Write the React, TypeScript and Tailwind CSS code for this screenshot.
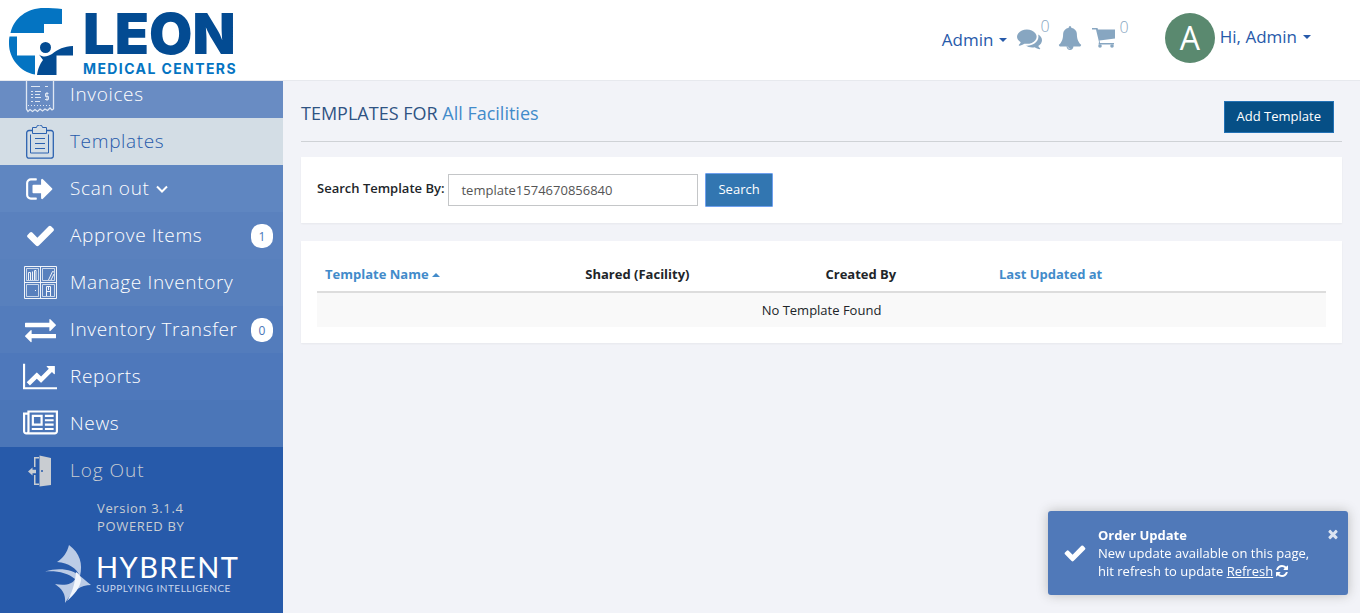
import type { ReactNode } from "react";

const PATHS = {
  check: "M1671 566q0 40-28 68l-724 724-136 136q-28 28-68 28t-68-28l-136-136-362-362q-28-28-28-68t28-68l136-136q28-28 68-28t68 28l294 295 656-657q28-28 68-28t68 28l136 136q28 28 28 68z",
  signOut: "M704 1440q0 4 1 20t.5 26.5-3 23.5-10 19.5-20.5 6.5h-320q-119 0-203.5-84.5t-84.5-203.5v-704q0-119 84.5-203.5t203.5-84.5h320q13 0 22.5 9.5t9.5 22.5q0 4 1 20t.5 26.5-3 23.5-10 19.5-20.5 6.5h-320q-66 0-113 47t-47 113v704q0 66 47 113t113 47h312l11.5 1 11.5 3 8 5.5 7 9 2 13.5zm928-544q0 26-19 45l-544 544q-19 19-45 19t-45-19-19-45v-288h-448q-26 0-45-19t-19-45v-384q0-26 19-45t45-19h448v-288q0-26 19-45t45-19 45 19l544 544q19 19 19 45z",
  exchange: "M1792 1184v192q0 13-9.5 22.5t-22.5 9.5h-1376v192q0 13-9.5 22.5t-22.5 9.5q-12 0-24-10l-319-320q-9-9-9-22 0-14 9-23l320-320q9-9 23-9 13 0 22.5 9.5t9.5 22.5v192h1376q13 0 22.5 9.5t9.5 22.5zm0-544q0 14-9 23l-320 320q-9 9-23 9-13 0-22.5-9.5t-9.5-22.5v-192h-1376q-13 0-22.5-9.5t-9.5-22.5v-192q0-13 9.5-22.5t22.5-9.5h1376v-192q0-14 9-23t23-9q12 0 24 10l319 319q9 9 9 23z",
  chart: "M2048 1536v128h-2048v-1536h128v1408h1920zm-128-1248v435q0 21-19.5 29.5t-35.5-7.5l-121-121-633 633q-10 10-23 10t-23-10l-233-233-416 416-192-192 585-585q10-10 23-10t23 10l233 233 464-464-121-121q-16-16-7.5-35.5t29.5-19.5h435q14 0 23 9t9 23z",
  news: "M1024 512h-384v384h384v-384zm128 640v128h-640v-128h640zm0-768v640h-640v-640h640zm640 768v128h-512v-128h512zm0-256v128h-512v-128h512zm0-256v128h-512v-128h512zm0-256v128h-512v-128h512zm-1536 960v-960h-128v960q0 26 19 45t45 19 45-19 19-45zm1664 0v-1088h-1536v1088q0 33-11 64h1483q26 0 45-19t19-45zm128-1216v1216q0 80-56 136t-136 56h-1664q-80 0-136-56t-56-136v-1088h256v-128h1792z",
  refresh: "M1639 1056q0 5-1 7-64 268-268 434.5t-478 166.5q-146 0-282.5-55t-243.5-157l-129 129q-19 19-45 19t-45-19-19-45v-448q0-26 19-45t45-19h448q26 0 45 19t19 45-19 45l-137 137q71 66 161 102t187 36q134 0 250-65t186-179q11-17 53-117 8-23 30-23h192q13 0 22.5 9.5t9.5 22.5zm25-800v448q0 26-19 45t-45 19h-448q-26 0-45-19t-19-45 19-45l138-138q-148-137-349-137-134 0-250 65t-186 179q-11 17-53 117-8 23-30 23h-199q-13 0-22.5-9.5t-9.5-22.5v-7q65-268 270-434.5t480-166.5q146 0 284 55.5t245 156.5l130-129q19-19 45-19t45 19 19 45z",
  times: "M1490 1322q0 40-28 68l-136 136q-28 28-68 28t-68-28l-294-294-294 294q-28 28-68 28t-68-28l-136-136q-28-28-28-68t28-68l294-294-294-294q-28-28-28-68t28-68l136-136q28-28 68-28t68 28l294 294 294-294q28-28 68-28t68 28l136 136q28 28 28 68t-28 68l-294 294 294 294q28 28 28 68z",
  comments: "M1408 768q0 139-94 257t-256.5 186.5-353.5 68.5q-86 0-176-16-124 88-278 128-36 9-86 16h-3q-11 0-20.5-8t-11.5-21q-1-3-1-6.5t.5-6.5 2-6l2.5-5 3.5-5.5 4-5 4.5-5 4-4.5q5-6 23-25t26-29.5 22.5-29 25-38.5 20.5-44q-124-72-195-177t-71-224q0-139 94-257t256.5-186.5 353.5-68.5 353.5 68.5 256.5 186.5 94 257zm384 256q0 120-71 224.5t-195 176.5q10 24 20.5 44t25 38.5 22.5 29 26 29.5 23 25q1 1 4 4.5t4.5 5 4 5 3.5 5.5l2.5 5 2 6 .5 6.5-1 6.5q-3 14-13 22t-22 7q-50-7-86-16-154-40-278-128-90 16-176 16-271 0-472-132 58 4 88 4 161 0 309-45t264-129q125-92 192-212t67-254q0-77-23-152 129 71 204 178t75 230z",
  bell: "M912 1696q0-16-16-16-59 0-101.5-42.5t-42.5-101.5q0-16-16-16t-16 16q0 73 51.5 124.5t124.5 51.5q16 0 16-16zm816-288q0 52-38 90t-90 38h-448q0 106-75 181t-181 75-181-75-75-181h-448q-52 0-90-38t-38-90q50-42 91-88t85-119.5 74.5-158.5 50-206 19.5-260q0-152 117-282.5t307-158.5q-8-19-8-39 0-40 28-68t68-28 68 28 28 68q0 20-8 39 190 28 307 158.5t117 282.5q0 139 19.5 260t50 206 74.5 158.5 85 119.5 91 88z",
};

function Glyph({ name, className, wide }: { name: keyof typeof PATHS; className: string; wide?: boolean }) {
  return (
    <svg viewBox={wide ? "0 0 2048 1792" : "0 0 1792 1792"} className={className} fill="currentColor" aria-hidden="true">
      <path d={PATHS[name]} />
    </svg>
  );
}

function Caret({ up }: { up?: boolean }) {
  return (
    <svg viewBox="0 0 8 4" className="inline-block h-1 w-2" fill="currentColor" aria-hidden="true">
      <path d={up ? "M0 4 4 0l4 4z" : "M0 0h8L4 4z"} />
    </svg>
  );
}

function InvoiceIcon() {
  return (
    <svg viewBox="0 0 30 40" className="-mt-1 h-10 w-[30px]" fill="none" stroke="#dfe7f3" aria-hidden="true">
      <path d="M1.500 36V1h27v35l-1.500 1-2-2-2.500 2.500-2.500-1.500-2.500 2-2.500-2-2.500 2.500-2.500-2-2.500 2-2.500-2-2 2z" strokeWidth="1.300" />
      <path d="M6 13.500h9M20 13.500h3M6 18.500h2M10 18.500h6M6 21.500h2M10 21.500h5M6 24.500h2M10 24.500h6M6 28.500h2M10 28.500h5" />
      <path d="M23.500 20.500h-3v3h3v3h-3.500M22 19v9" />
      <path d="M3 32.500h24" strokeDasharray="1 2" />
    </svg>
  );
}

function ClipboardIcon() {
  return (
    <svg viewBox="0 0 28 34" className="h-[34px] w-7" fill="none" stroke="#2c62b0" aria-hidden="true">
      <path d="M7 5.500H3a2.300 2.300 0 0 0-2.300 2.300v23A2.300 2.300 0 0 0 3 33.200h22a2.300 2.300 0 0 0 2.300-2.300v-23A2.300 2.300 0 0 0 25 5.500h-4" strokeWidth="1.300" />
      <path d="M4.500 9.500v18.500h18V9.500M6.500 8.500v-6h4a3 2.500 0 0 1 6 0h4v6zM9 13.500h10M9 18.500h10M9 23.500h10" />
    </svg>
  );
}

function CabinetIcon() {
  return (
    <svg viewBox="0 0 33 33" className="size-[33px]" fill="none" stroke="#f2f5fa" aria-hidden="true">
      <path d="M.5.500h32v32H.5zM16.500.500v32M.5 16.500h32" />
      <path d="M2.500 2.500h12v12h-12zM18.500 2.500h12v12h-12zM2.500 18.500h12v12h-12zM18.500 18.500h12v12h-12z" strokeOpacity=".75" />
      <path d="M4.500 14V6.500h2V14M8.500 14V5.500M10.500 14V4.500h1.500V14M24.500 14l4-8.500 1.500.5M27 14l3-6M22.500 30v-9.500h4V30M22.500 25.500h4M24.500 21v3M11 24.500h1" />
    </svg>
  );
}

function DoorIcon() {
  return (
    <svg viewBox="0 0 24 32" className="h-8 w-6" fill="#c9cdd2" aria-hidden="true">
      <path d="M11.500.500 23 3v27l-11.500 1.500zM6 2h5v1.500H7.500V12H6zM6 20h1.500v8.500H11V30H6z" />
      <path d="m0 16.500 4.500-4v2.300H8v3.500H4.500v2.200z" />
      <circle cx="14" cy="16" r="1" fill="#275aaa" />
    </svg>
  );
}

function LeonLogo() {
  return (
    <a href="#home" className="flex items-center gap-2.5 pl-[9px]" aria-label="Leon Medical Centers">
      <svg viewBox="0 0 64 68" className="mt-px h-[68px] w-16" aria-hidden="true">
        <path fill="#0474c2" d="M53 1v15H35v9H1.500C5 10 18 0 35 0c6 0 12 0 18 1z" />
        <path fill="#0474c2" d="M.5 28.500H8V47.500h18v19C11 64 0 50 0 36c0-3 0-5 .5-7.500z" />
        <circle cx="36.500" cy="39.500" r="5.500" fill="#034b92" />
        <path fill="#034b92" d="M28 67c1-7 3-11 6-15l-4-5.500c4 3 8 2.500 13-.5C49 41 55 38.500 64 38v9.500H47.500V67z" />
      </svg>
      <span className="flex flex-col pt-0.5 font-[Inter,sans-serif]">
        <span className="text-[56px] leading-[54px] font-black text-[#034b92]">LEON</span>
        <span className="text-[14px] leading-4 font-bold tracking-widest text-[#0474c2]">MEDICAL CENTERS</span>
      </span>
    </a>
  );
}

function HybrentLogo() {
  return (
    <div className="mt-2 flex items-center gap-1 pl-[45px]">
      <svg viewBox="0 0 47 58" className="mt-0.5 h-[58px] w-[47px] shrink-0" aria-hidden="true">
        <path fill="#bccce6" d="M24 0c11 8 14 19 11 31-4-8-11-13-23-14C18 13 22 8 24 0z" />
        <path fill="#bccce6" d="M0 26.500C15 22 28 25 35 31c4 3 7 6 11 9-10 0-18 5-26 18 1-9-3-14-10-19 10 2 18 0 20-5-7-6-18-8.500-30-7.500z" />
        <path fill="#f2f6fc" d="M31 27c3 2 5 4 5 8-1 8-7 15-14 21 5-8 8-17 9-29z" />
      </svg>
      <span className="flex flex-col font-[Lato,sans-serif] text-white">
        <span className="text-[29px] leading-[30px] tracking-wider">HYBRENT</span>
        <span className="text-[10px] leading-3 tracking-wider text-[#c9d6ec]">SUPPLYING INTELLIGENCE</span>
      </span>
    </div>
  );
}

type Item = { label: string; icon: ReactNode; bg: string; active?: boolean; badge?: number; chevron?: boolean };

const ITEMS: Item[] = [
  { label: "Invoices", icon: <InvoiceIcon />, bg: "bg-[#698cc3]" },
  { label: "Templates", icon: <ClipboardIcon />, bg: "bg-[#d3dde5]", active: true },
  { label: "Scan out", icon: <Glyph name="signOut" className="size-[30px]" />, bg: "bg-[#5f86c1]", chevron: true },
  { label: "Approve Items", icon: <Glyph name="check" className="size-[31px]" />, bg: "bg-[#5a81be]", badge: 1 },
  { label: "Manage Inventory", icon: <CabinetIcon />, bg: "bg-[#5880bd]" },
  { label: "Inventory Transfer", icon: <Glyph name="exchange" className="size-[31px]" />, bg: "bg-[#537cbc]", badge: 0 },
  { label: "Reports", icon: <Glyph name="chart" wide className="h-[31px] w-[34px]" />, bg: "bg-[#4e78bb]" },
  { label: "News", icon: <Glyph name="news" wide className="h-[31px] w-[35px]" />, bg: "bg-[#4b76b8]" },
];

function NavRow({ item }: { item: Item }) {
  return (
    <li>
      <a href="#nav" className={`flex h-[47px] items-center pr-2.5 text-[19px] font-light ${item.bg} ${item.active ? "text-[#275aaa]" : "text-white"}`}>
        <span className="flex w-[70px] shrink-0 justify-center pl-2.5">{item.icon}</span>
        <span className="flex items-center gap-1.5 whitespace-nowrap">
          {item.label}
          {item.chevron && (
            <svg viewBox="0 0 12 8" className="h-2 w-3" fill="none" stroke="currentColor" strokeWidth="2" aria-hidden="true">
              <path d="m1 1.500 5 5 5-5" />
            </svg>
          )}
        </span>
        {item.badge !== undefined && (
          <span className="ml-auto flex h-6 w-[22px] items-center justify-center rounded-[10px] bg-white pt-0.5 text-xs font-normal tracking-normal text-[#4b76b8]">{item.badge}</span>
        )}
      </a>
    </li>
  );
}

export default function App() {
  return (
    <div className="flex min-h-screen flex-col bg-[#f2f3f8] font-['Open_Sans',sans-serif] text-[13px] text-[#212529]">
      <header className="flex h-[81px] items-start justify-between border-b border-[#e7e9ee] bg-white pt-[5px]">
        <LeonLogo />
        <div className="flex items-center pt-2 pr-[49px] text-[#275aaa]">
          <button type="button" className="mt-1 flex items-center gap-1.5 text-[17px]">
            Admin <Caret />
          </button>
          <div className="mb-1 ml-2.5 flex items-center text-[#87a6c1]">
            <button type="button" aria-label="Messages" className="flex items-start text-base leading-4">
              <Glyph name="comments" className="mt-1 size-[25px]" />
              <span className="-mt-1 -ml-0.5 font-light">0</span>
            </button>
            <button type="button" aria-label="Notifications" className="mt-1 ml-2">
              <Glyph name="bell" className="size-6" />
            </button>
            <button type="button" aria-label="Cart" className="ml-2.5 flex items-start text-base leading-4">
              <svg viewBox="0 0 24 22" className="mt-1 h-[22px] w-6" fill="currentColor" aria-hidden="true">
                <path d="M0 1h5.500l.5 1.500h17v9L7.500 13.500l.5 2.500h14v1.500H6.500L7 15 4 2.500H0z" />
                <circle cx="8" cy="19" r="1.800" />
                <circle cx="20" cy="19" r="1.800" />
              </svg>
              <span className="-mt-1 ml-1 font-light">0</span>
            </button>
          </div>
          <span className="ml-9 flex size-[50px] items-center justify-center rounded-full bg-[#5a896f] text-[32px] text-white">A</span>
          <button type="button" className="ml-[5px] flex items-center gap-1.5 pb-0.5 text-[17px]">
            Hi, Admin <Caret />
          </button>
        </div>
      </header>

      <div className="flex grow">
        <aside className="flex w-[283px] shrink-0 flex-col bg-[#275aaa] text-[#c9cdd2]">
          <nav aria-label="Main" className="overflow-hidden tracking-wider">
            <ul className="-mt-2.5">
              {ITEMS.map((item) => (
                <NavRow key={item.label} item={item} />
              ))}
            </ul>
          </nav>
          <a href="#logout" className="flex h-[47px] items-center text-[19px] font-light tracking-wider">
            <span className="flex w-[70px] justify-center pl-2.5">
              <DoorIcon />
            </span>
            <span>Log Out</span>
          </a>
          <p className="mt-[5px] pl-[97px] leading-[18px] tracking-wider">
            Version 3.1.4
            <br />
            POWERED BY
          </p>
          <HybrentLogo />
        </aside>

        <main className="min-w-0 grow px-[18px] pt-5">
          <div className="flex items-start justify-between border-b border-[#cfd2d6] pr-2 pb-2">
            <h1 className="text-lg leading-6 text-[#2f5383]">
              TEMPLATES FOR <a href="#facilities" className="text-[#428bca]">All Facilities</a>
            </h1>
            <button type="button" className="h-8 border border-[#2271b5] bg-[#064f86] px-3 font-medium text-white">
              Add Template
            </button>
          </div>

          <form className="mt-[15px] flex items-center bg-white px-4 py-4 shadow-xs" onSubmit={(e) => e.preventDefault()}>
            <label htmlFor="search" className="mr-1 pb-0.5 font-semibold">Search Template By:</label>
            <input id="search" type="text" defaultValue="template1574670856840" className="h-8 w-[250px] border border-[#c4c6c8] bg-white px-3 text-[#555]" />
            <button type="submit" className="ml-[7px] h-[34px] rounded-[1px] border border-[#6fa0ee] bg-[#3276b1] px-3 font-medium text-white">
              Search
            </button>
          </form>

          <section className="mt-[18px] bg-white p-4 shadow-xs">
            <table className="w-full table-fixed text-left">
              <colgroup>
                <col className="w-[25.8%]" />
                <col className="w-[23.8%]" />
                <col className="w-[17.2%]" />
                <col />
              </colgroup>
              <thead>
                <tr className="h-[35px] border-b-2 border-[#ddd] font-bold">
                  <th className="px-2 pt-0.5">
                    <a href="#name" className="inline-flex items-center gap-[3px] text-[#428bca]">
                      Template Name <Caret up />
                    </a>
                  </th>
                  <th className="px-2 pt-0.5">Shared (Facility)</th>
                  <th className="px-2 pt-0.5">Created By</th>
                  <th className="px-2 pt-0.5">
                    <a href="#updated" className="text-[#428bca]">Last Updated at</a>
                  </th>
                </tr>
              </thead>
              <tbody>
                <tr className="h-[35px] bg-[#f9f9f9]">
                  <td colSpan={4} className="pt-0.5 text-center">No Template Found</td>
                </tr>
              </tbody>
            </table>
          </section>
        </main>
      </div>

      <div role="status" className="fixed right-3 bottom-[18px] flex h-[84px] w-[300px] items-center rounded-[3px] bg-[#5079b9] pl-[15px] leading-[18px] text-white shadow-[0_0_12px_#bbb]">
        <Glyph name="check" className="size-6 shrink-0" />
        <div className="ml-[11px]">
          <strong className="block font-bold">Order Update</strong>
          <p>
            New update available on this page,
            <br />
            hit refresh to update <a href="#refresh" className="underline">Refresh</a>{" "}
            <Glyph name="refresh" className="-ml-0.5 inline-block size-[14px] align-[-2px]" />
          </p>
        </div>
        <button type="button" aria-label="Close" className="absolute top-4 right-2 text-[#dce4f1]">
          <Glyph name="times" className="size-[14px]" />
        </button>
      </div>
    </div>
  );
}
